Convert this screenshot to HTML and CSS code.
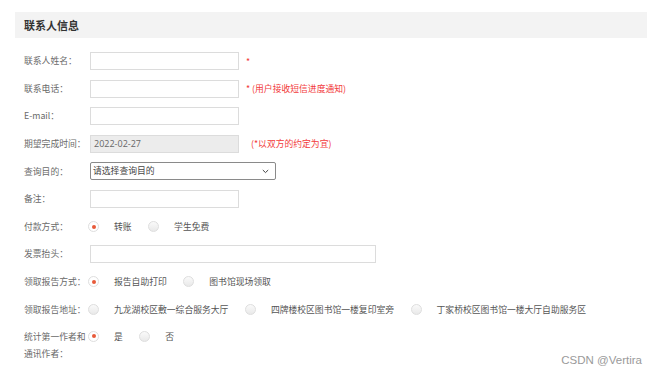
FILE: index.html
```html
<!DOCTYPE html>
<html lang="zh">
<head>
<meta charset="utf-8">
<link rel="stylesheet" href="styles.css">
</head>
<body>
<div class="panel">
  <div class="header">联系人信息</div>
  <div class="form">
    <div class="row">
      <span class="label">联系人姓名：</span>
      <span class="input"></span>
      <span class="note note-star">*</span>
    </div>
    <div class="row">
      <span class="label">联系电话：</span>
      <span class="input"></span>
      <span class="note note-star">* (用户接收短信进度通知)</span>
    </div>
    <div class="row">
      <span class="label">E-mail：</span>
      <span class="input"></span>
    </div>
    <div class="row">
      <span class="label">期望完成时间：</span>
      <span class="input input-disabled">2022-02-27</span>
      <span class="note note-date">(*以双方的约定为宜)</span>
    </div>
    <div class="row">
      <span class="label">查询目的：</span>
      <span class="select">请选择查询目的
        <svg class="chev" width="7" height="5" viewBox="0 0 7 5"><path d="M0.8 1 L3.5 3.6 L6.2 1" fill="none" stroke="#444" stroke-width="1"/></svg>
      </span>
    </div>
    <div class="row">
      <span class="label">备注：</span>
      <span class="input"></span>
    </div>
    <div class="row">
      <span class="label">付款方式：</span>
      <span class="radio checked"></span><span class="opt">转账</span>
      <span class="radio"></span><span class="opt">学生免费</span>
    </div>
    <div class="row">
      <span class="label">发票抬头：</span>
      <span class="input input-wide"></span>
    </div>
    <div class="row">
      <span class="label">领取报告方式：</span>
      <span class="radio checked"></span><span class="opt">报告自助打印</span>
      <span class="radio"></span><span class="opt">图书馆现场领取</span>
    </div>
    <div class="row">
      <span class="label">领取报告地址：</span>
      <span class="radio"></span><span class="opt">九龙湖校区敷一综合服务大厅</span>
      <span class="radio"></span><span class="opt">四牌楼校区图书馆一楼复印室旁</span>
      <span class="radio"></span><span class="opt">丁家桥校区图书馆一楼大厅自助服务区</span>
    </div>
    <div class="row row-multi">
      <span class="label label-multi">统计第一作者和通讯作者：</span>
      <span class="radio checked"></span><span class="opt">是</span>
      <span class="radio"></span><span class="opt">否</span>
    </div>
  </div>
</div>
<div class="watermark">CSDN @Vertira</div>
</body>
</html>
```
FILE: styles.css
```css
* { box-sizing: border-box; }
html, body { margin: 0; padding: 0; background: #fff; }
body {
  width: 660px;
  height: 375px;
  position: relative;
  overflow: hidden;
  font-family: "Noto Sans CJK SC", "Noto Sans", sans-serif;
  color: #666;
}
.panel {
  margin-left: 15px;
  padding-top: 12px;
  width: 632px;
}
.header {
  height: 26px;
  line-height: 26px;
  background: #f3f3f3;
  padding-left: 9px;
  font-size: 11px;
  font-weight: bold;
  color: #333;
}
.form {
  padding-left: 9px;
  padding-top: 14px;
}
.row {
  display: flex;
  align-items: center;
  height: 18px;
  margin-bottom: 9.6px;
  font-size: 8.8px;
}
.row-multi {
  align-items: flex-start;
  height: auto;
  margin-top: 1px;
}
.label {
  width: 66px;
  flex: none;
  color: #6a6a6a;
  line-height: 17.5px;
}
.input {
  width: 149px;
  height: 18px;
  border: 1px solid #dcdcdc;
  background: #fff;
  flex: none;
}
.input-wide { width: 286px; }
.input-disabled {
  background: #ececec;
  color: #666;
  padding-left: 3px;
  line-height: 16px;
  font-family: "Open Sans", "Noto Sans", sans-serif;
  font-size: 9px;
}
.select {
  width: 186px;
  height: 18px;
  border: 1px solid #8a8a8a;
  border-radius: 2px;
  color: #444;
  padding-left: 2px;
  line-height: 16px;
  display: flex;
  align-items: center;
  justify-content: space-between;
  padding-right: 6px;
  flex: none;
}
.note {
  color: #f23a3a;
  font-size: 8.8px;
}
.note-star { margin-left: 7px; }
.note-date { margin-left: 12px; }
.radio {
  width: 11px;
  height: 11px;
  border-radius: 50%;
  border: 1px solid #dedede;
  background: linear-gradient(#fafafa, #e9e9e9);
  flex: none;
  margin-left: -2px;
  margin-right: 15px;
  position: relative;
}
.radio.checked {
  background: #fff;
}
.radio.checked::after {
  content: "";
  position: absolute;
  left: 2.5px;
  top: 2.5px;
  width: 4px;
  height: 4px;
  border-radius: 50%;
  background: #e85a3a;
}
.opt {
  color: #555;
  margin-right: 16.5px;
  white-space: nowrap;
}
.opt + .radio { margin-left: 0; }
.row-multi .radio { margin-top: 3px; }
.row-multi .opt { line-height: 17.5px; }
.watermark {
  position: absolute;
  right: 18px;
  bottom: 9px;
  font-family: "Liberation Sans", Arial, sans-serif;
  font-size: 11.5px;
  color: #9a9a9a;
}
```
